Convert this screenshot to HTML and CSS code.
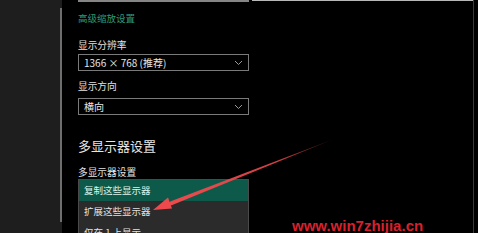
FILE: index.html
```html
<!DOCTYPE html>
<html lang="zh-CN">
<head>
<meta charset="utf-8">
<link rel="stylesheet" href="styles.css">
</head>
<body>
<div class="window">
  <aside class="sidebar"><div class="scrollbar"></div></aside>
  <main class="content">
    <div class="stub"></div>
    <a class="link">高级缩放设置</a>
    <div class="label l1">显示分辨率</div>
    <div class="select s1"><span>1366 × 768 (推荐)</span><svg class="chev" width="9" height="6" viewBox="0 0 9 6"><path d="M1 1 L4.5 4.5 L8 1" fill="none" stroke="#9a9a9a" stroke-width="1"/></svg></div>
    <div class="label l2">显示方向</div>
    <div class="select s2"><span>横向</span><svg class="chev" width="9" height="6" viewBox="0 0 9 6"><path d="M1 1 L4.5 4.5 L8 1" fill="none" stroke="#9a9a9a" stroke-width="1"/></svg></div>
    <h2 class="heading">多显示器设置</h2>
    <div class="label l3">多显示器设置</div>
    <ul class="list">
      <li class="item active">复制这些显示器</li>
      <li class="item">扩展这些显示器</li>
      <li class="item">仅在 1 上显示</li>
    </ul>
  </main>
  <div class="edge"></div>
  <div class="topline"></div>
  <svg class="arrow" width="478" height="233" viewBox="0 0 478 233">
    <defs>
      <linearGradient id="g" x1="335" y1="138" x2="168" y2="204" gradientUnits="userSpaceOnUse">
        <stop offset="0" stop-color="#e8474a" stop-opacity="0.15"/>
        <stop offset="0.35" stop-color="#e8474a" stop-opacity="0.9"/>
        <stop offset="1" stop-color="#ee4a4d"/>
      </linearGradient>
    </defs>
    <path d="M334 139 L171 205.6 L167.6 202.4 Z" fill="url(#g)"/>
    <path d="M153 210 L172 208.5 L168 197.5 Z" fill="#ee4a4d"/>
  </svg>
  <div class="watermark">www.win7zhijia.cn</div>
</div>
</body>
</html>
```
FILE: styles.css
```css
html, body {
  margin: 0;
  padding: 0;
  background: #000;
}
.window {
  position: relative;
  width: 478px;
  height: 233px;
  overflow: hidden;
  display: flex;
  font-family: "Noto Sans CJK SC", "Noto Sans", sans-serif;
  color: #e4e4e4;
}
.sidebar {
  width: 62px;
  flex: none;
  background: #1e1e1e;
  display: flex;
  justify-content: flex-end;
  padding: 8px 0 11px;
  box-sizing: border-box;
}
.scrollbar {
  width: 2px;
  background: #6e6e6e;
}
.content {
  flex: 1;
  padding-left: 16px;
  display: flex;
  flex-direction: column;
  align-items: flex-start;
}
.stub {
  width: 171px;
  height: 6px;
  box-sizing: border-box;
  border: 2px solid #858585;
  border-top: none;
}
.link {
  margin-top: 9px;
  font-size: 9.5px;
  line-height: 14px;
  color: #2e9a76;
}
.label {
  font-size: 9.7px;
  line-height: 14px;
  color: #e2e2e2;
}
.l1 { margin-top: 13px; }
.l2 { margin-top: 8px; }
.l3 { margin-top: 9px; }
.select {
  width: 171px;
  height: 18px;
  box-sizing: border-box;
  border: 1.5px solid #7a7a7a;
  display: flex;
  align-items: center;
  justify-content: space-between;
  padding: 0 5px 0 5px;
  font-size: 10px;
  color: #e6e6e6;
}
.s1 { margin-top: 2px; }
.s2 { margin-top: 5px; }
.chev { display: block; }
.heading {
  margin: 21px 0 0;
  font-size: 13px;
  line-height: 20px;
  font-weight: 400;
  color: #e6e6e6;
}
.list {
  list-style: none;
  margin: 0;
  padding: 0;
  width: 171px;
  box-sizing: border-box;
  border: 1.5px solid #4a4a4a;
  border-bottom: none;
  background: #2b2b2b;
}
.item {
  height: 21px;
  line-height: 21px;
  padding-left: 5px;
  font-size: 9.5px;
  color: #e2e2e2;
}
.item.active {
  background: #0d5a4a;
  color: #dff3ec;
}
.edge {
  position: absolute;
  top: 0;
  right: 4px;
  width: 1px;
  height: 233px;
  background: #3a3a3a;
}
.topline {
  position: absolute;
  top: 0;
  left: 252px;
  width: 221px;
  height: 1px;
  background: #b8b8b8;
}
.arrow {
  position: absolute;
  left: 0;
  top: 0;
  pointer-events: none;
}
.watermark {
  position: absolute;
  left: 292px;
  top: 217px;
  font-family: "Liberation Sans", Arial, sans-serif;
  font-weight: 700;
  font-size: 15px;
  line-height: 17px;
  color: #d9212e;
}
```
